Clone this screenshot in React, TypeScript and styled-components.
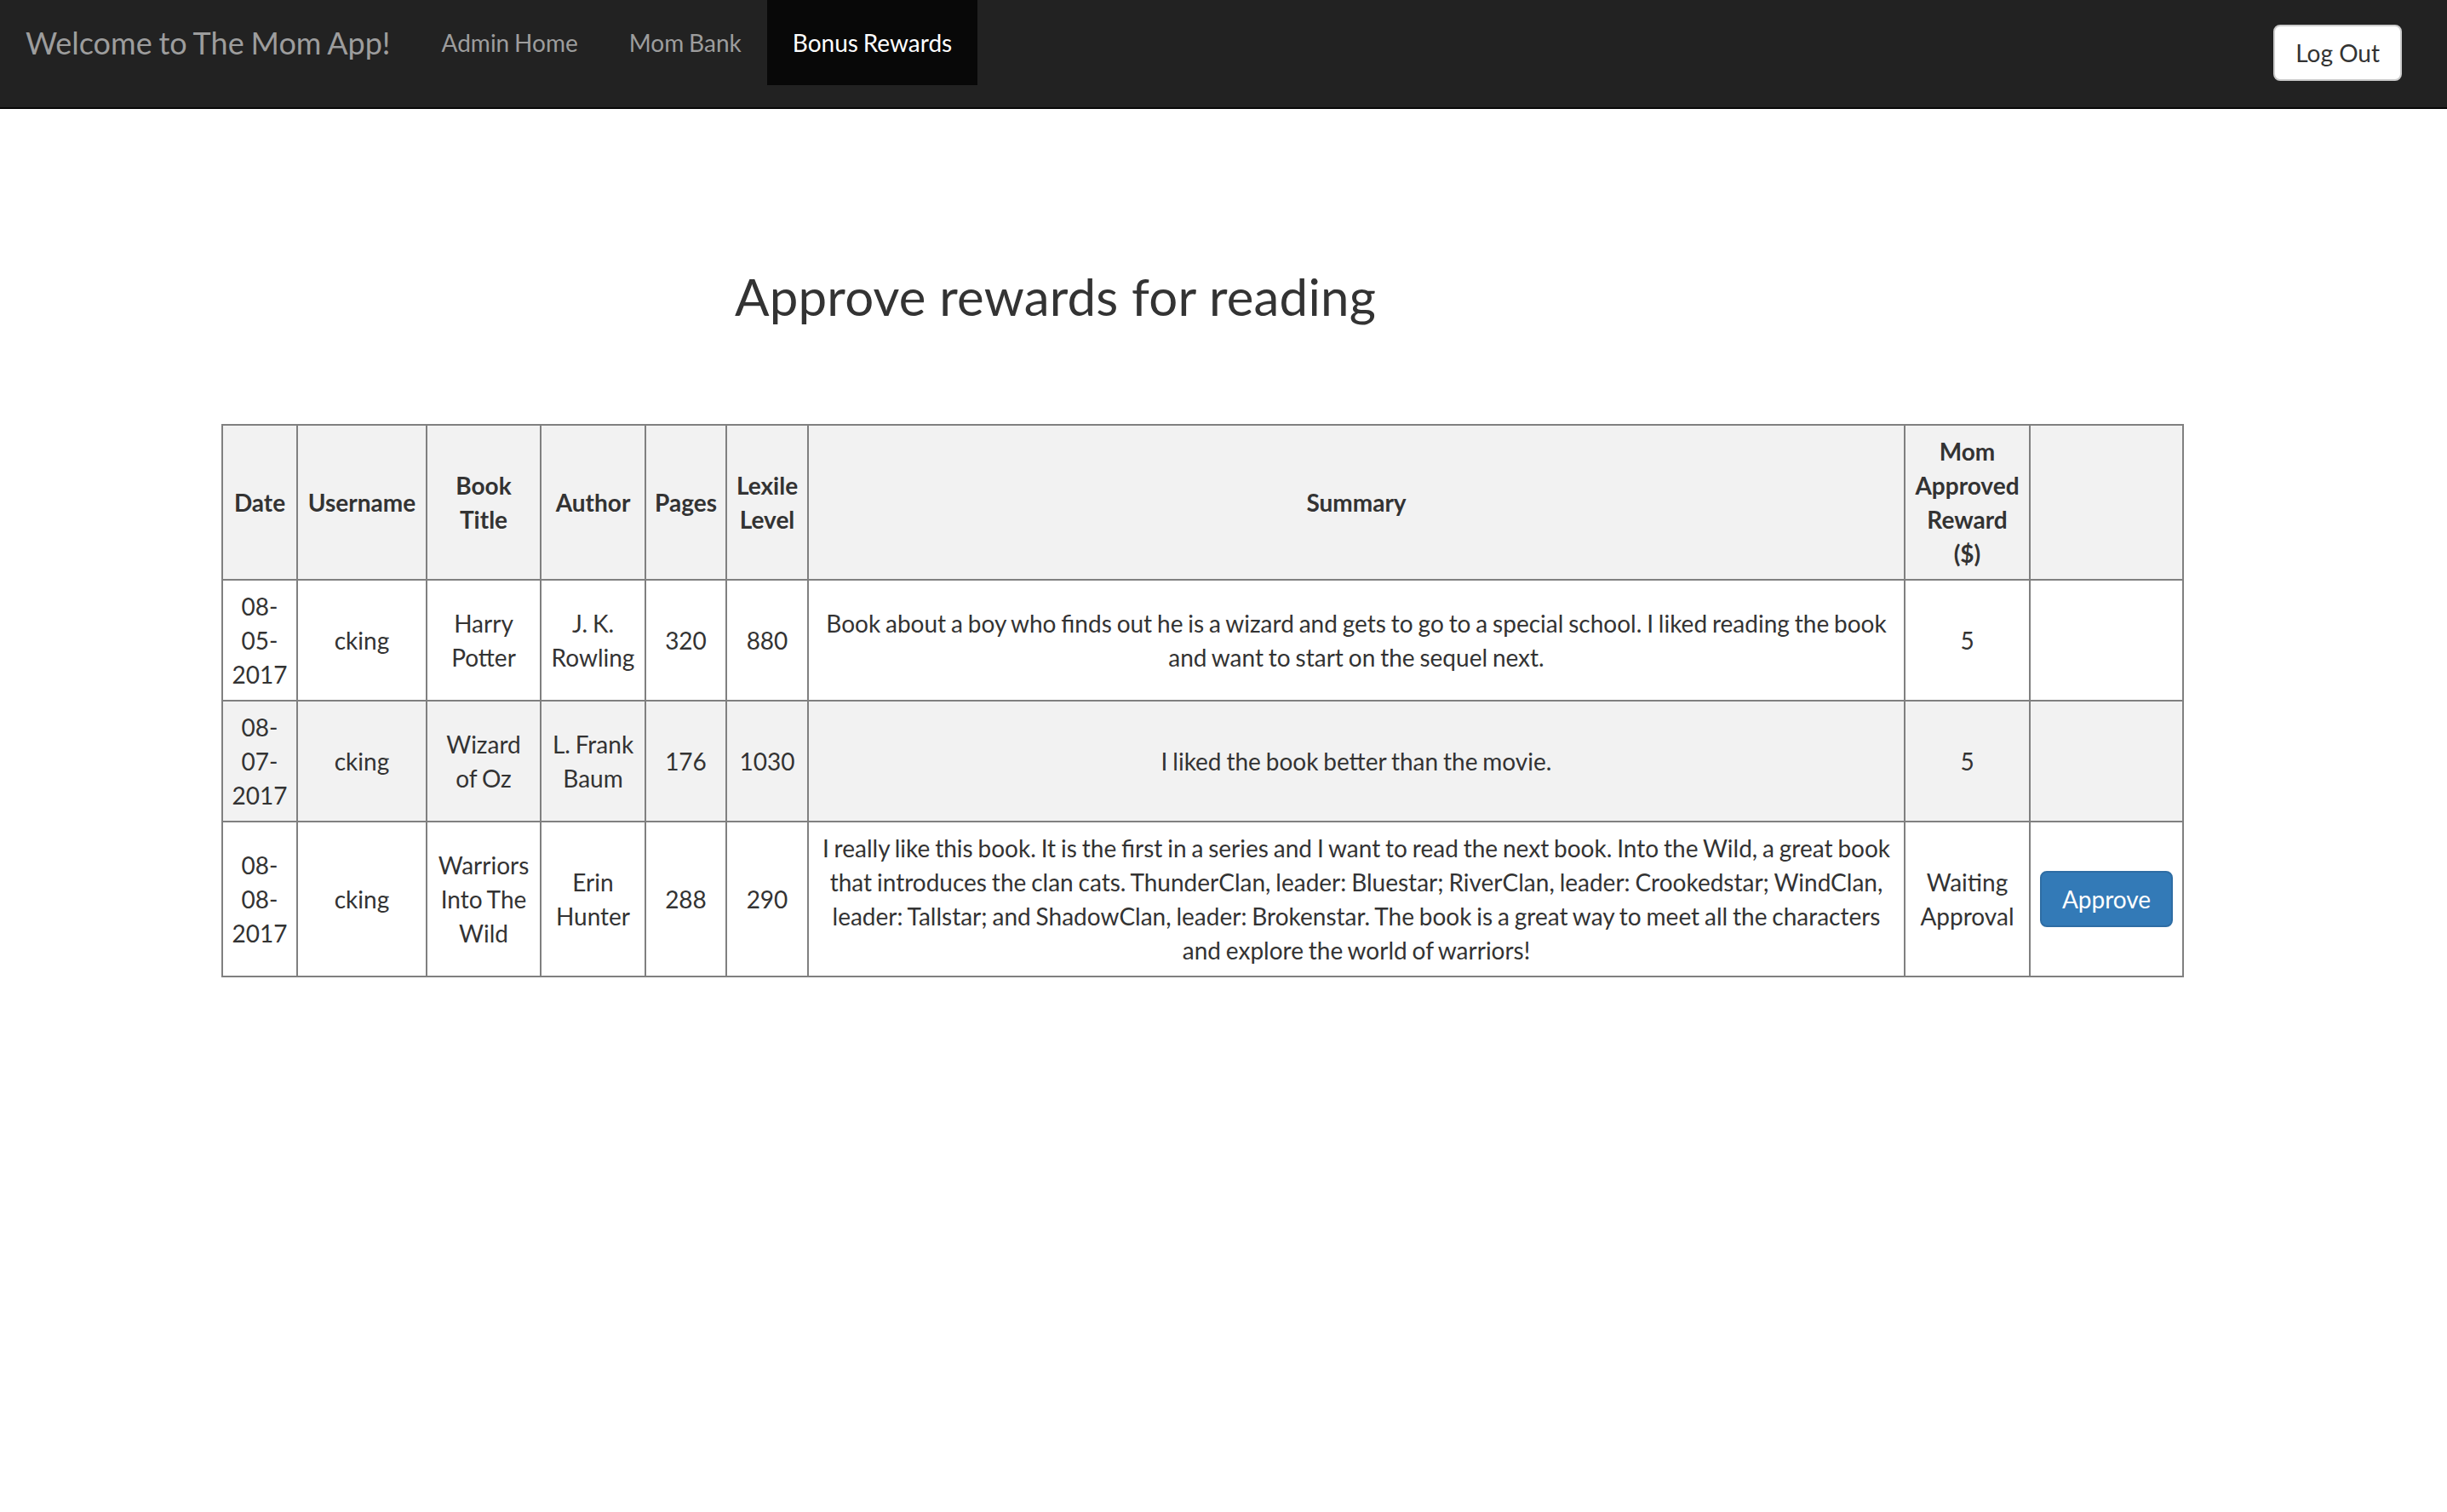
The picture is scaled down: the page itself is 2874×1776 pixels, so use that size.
import * as React from 'react';
import styled, { createGlobalStyle } from 'styled-components';

const GlobalStyle = createGlobalStyle`
    html, body {
        margin: 0;
        padding: 0;
        background: #fff;
    }
    body {
        font-family: Lato, "Open Sans", "Liberation Sans", sans-serif;
        font-size: 28px;
        line-height: 40px;
        word-spacing: -1.3px;
        color: #333;
    }
`;

const Navbar = styled.nav`
    display: flex;
    align-items: flex-start;
    height: 126px;
    background: #222;
    border-bottom: 2px solid #080808;
`;

const Brand = styled.a`
    padding: 0 30px;
    font-size: 36px;
    line-height: 100px;
    color: #9d9d9d;
    text-decoration: none;
`;

const NavLink = styled.a<{ $active?: boolean }>`
    padding: 0 30px;
    font-size: 28px;
    line-height: 100px;
    color: ${(p) => (p.$active ? '#fff' : '#9d9d9d')};
    background: ${(p) => (p.$active ? '#080808' : 'transparent')};
    text-decoration: none;
`;

const LogOutButton = styled.button`
    margin: 29px 53px 0 auto;
    height: 66px;
    padding: 0 24px;
    font-family: inherit;
    font-size: 28px;
    color: #333;
    background: #fff;
    border: 2px solid #ccc;
    border-radius: 8px;
`;

const Main = styled.main`
    padding: 187px 0 0 260px;
`;

const Title = styled.h2`
    margin: 0 0 117px 603px;
    font-size: 60px;
    line-height: 66px;
    font-weight: 400;
    letter-spacing: 0.2px;
    word-spacing: normal;
    color: #333;
`;

const Table = styled.table`
    width: 2303px;
    table-layout: fixed;
    border-collapse: collapse;
    border: 2px solid #808080;
`;

const HeadCell = styled.th`
    padding: 10px;
    border: 2px solid #808080;
    background: #f2f2f2;
    font-weight: 700;
    text-align: center;
    vertical-align: middle;
`;

const Row = styled.tr<{ $striped?: boolean }>`
    background: ${(p) => (p.$striped ? '#f2f2f2' : '#fff')};
`;

const Cell = styled.td`
    padding: 10px;
    border: 2px solid #808080;
    text-align: center;
    vertical-align: middle;
`;

const ApproveButton = styled.button`
    height: 66px;
    padding: 0 24px;
    font-family: inherit;
    font-size: 28px;
    color: #fff;
    background: #337ab7;
    border: 2px solid #2e6da4;
    border-radius: 8px;
`;

const widths = [88, 152, 134, 123, 95, 96, 1288, 147, 180];

const headers = [
    'Date',
    'Username',
    'Book Title',
    'Author',
    'Pages',
    'Lexile Level',
    'Summary',
    'Mom Approved Reward ($)',
    '',
];

const rewards = [
    {
        date: '08-05-2017',
        user: 'cking',
        title: 'Harry Potter',
        author: 'J. K. Rowling',
        pages: 320,
        lexile: 880,
        summary:
            'Book about a boy who finds out he is a wizard and gets to go to a special school. I liked reading the book and want to start on the sequel next.',
        reward: '5',
    },
    {
        date: '08-07-2017',
        user: 'cking',
        title: 'Wizard of Oz',
        author: 'L. Frank Baum',
        pages: 176,
        lexile: 1030,
        summary: 'I liked the book better than the movie.',
        reward: '5',
    },
    {
        date: '08-08-2017',
        user: 'cking',
        title: 'Warriors Into The Wild',
        author: 'Erin Hunter',
        pages: 288,
        lexile: 290,
        summary:
            'I really like this book. It is the first in a series and I want to read the next book. Into the Wild, a great book that introduces the clan cats. ThunderClan, leader: Bluestar; RiverClan, leader: Crookedstar; WindClan, leader: Tallstar; and ShadowClan, leader: Brokenstar. The book is a great way to meet all the characters and explore the world of warriors!',
        reward: 'Waiting Approval',
        pending: true,
    },
];

export default function App() {
    return (
        <>
            <GlobalStyle />
            <Navbar>
                <Brand href="#">Welcome to The Mom App!</Brand>
                <NavLink href="#">Admin Home</NavLink>
                <NavLink href="#">Mom Bank</NavLink>
                <NavLink href="#" $active>
                    Bonus Rewards
                </NavLink>
                <LogOutButton>Log Out</LogOutButton>
            </Navbar>
            <Main>
                <Title>Approve rewards for reading</Title>
                <Table>
                    <colgroup>
                        {widths.map((w, i) => (
                            <col key={i} style={{ width: w }} />
                        ))}
                    </colgroup>
                    <thead>
                        <tr>
                            {headers.map((h, i) => (
                                <HeadCell key={i}>{h}</HeadCell>
                            ))}
                        </tr>
                    </thead>
                    <tbody>
                        {rewards.map((r, i) => (
                            <Row key={i} $striped={i % 2 === 1}>
                                <Cell>{r.date}</Cell>
                                <Cell>{r.user}</Cell>
                                <Cell>{r.title}</Cell>
                                <Cell>{r.author}</Cell>
                                <Cell>{r.pages}</Cell>
                                <Cell>{r.lexile}</Cell>
                                <Cell>{r.summary}</Cell>
                                <Cell>{r.reward}</Cell>
                                <Cell>{r.pending && <ApproveButton>Approve</ApproveButton>}</Cell>
                            </Row>
                        ))}
                    </tbody>
                </Table>
            </Main>
        </>
    );
}
